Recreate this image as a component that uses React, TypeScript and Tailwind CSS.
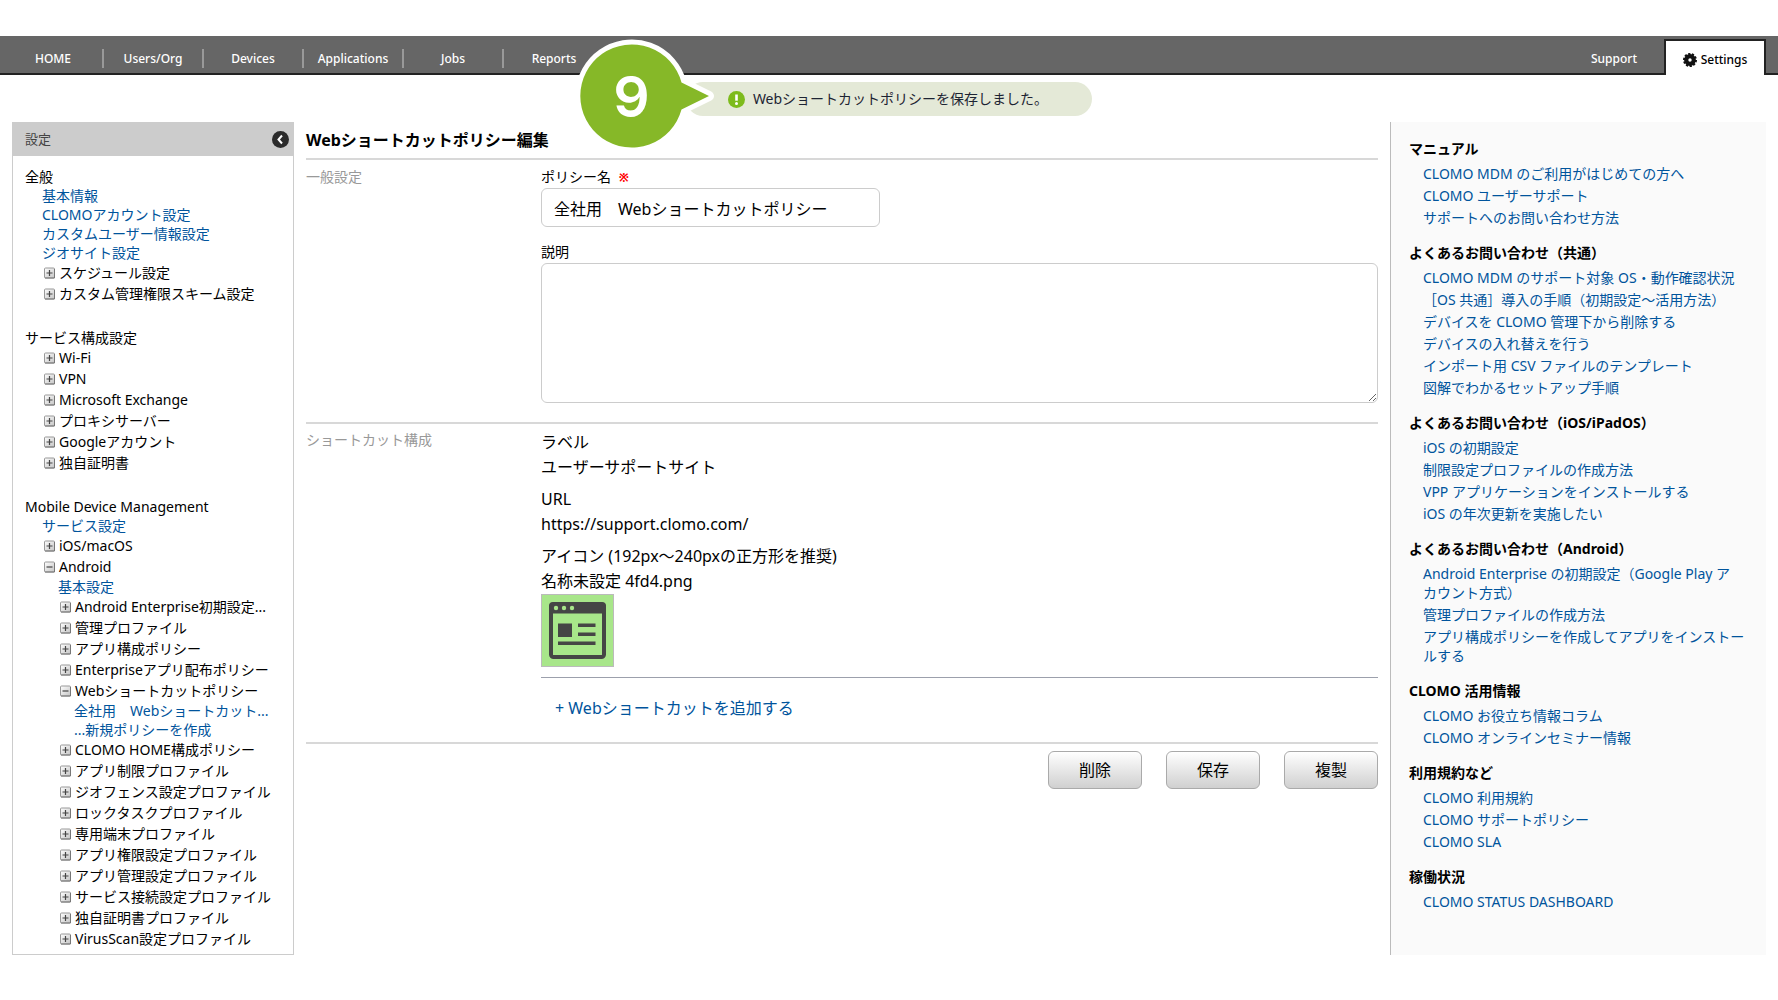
import { useState } from 'react'
import clsx from 'clsx'

type Row = { kind: 'link' | 'open' | 'closed'; level: 1 | 2 | 3; label: string }

const groups: { title: string; rows: Row[] }[] = [
  {
    title: '全般',
    rows: [
      { kind: 'link', level: 1, label: '基本情報' },
      { kind: 'link', level: 1, label: 'CLOMOアカウント設定' },
      { kind: 'link', level: 1, label: 'カスタムユーザー情報設定' },
      { kind: 'link', level: 1, label: 'ジオサイト設定' },
      { kind: 'closed', level: 1, label: 'スケジュール設定' },
      { kind: 'closed', level: 1, label: 'カスタム管理権限スキーム設定' },
    ],
  },
  {
    title: 'サービス構成設定',
    rows: [
      { kind: 'closed', level: 1, label: 'Wi-Fi' },
      { kind: 'closed', level: 1, label: 'VPN' },
      { kind: 'closed', level: 1, label: 'Microsoft Exchange' },
      { kind: 'closed', level: 1, label: 'プロキシサーバー' },
      { kind: 'closed', level: 1, label: 'Googleアカウント' },
      { kind: 'closed', level: 1, label: '独自証明書' },
    ],
  },
  {
    title: 'Mobile Device Management',
    rows: [
      { kind: 'link', level: 1, label: 'サービス設定' },
      { kind: 'closed', level: 1, label: 'iOS/macOS' },
      { kind: 'open', level: 1, label: 'Android' },
      { kind: 'link', level: 2, label: '基本設定' },
      { kind: 'closed', level: 2, label: 'Android Enterprise初期設定...' },
      { kind: 'closed', level: 2, label: '管理プロファイル' },
      { kind: 'closed', level: 2, label: 'アプリ構成ポリシー' },
      { kind: 'closed', level: 2, label: 'Enterpriseアプリ配布ポリシー' },
      { kind: 'open', level: 2, label: 'Webショートカットポリシー' },
      { kind: 'link', level: 3, label: '全社用　Webショートカット...' },
      { kind: 'link', level: 3, label: '...新規ポリシーを作成' },
      { kind: 'closed', level: 2, label: 'CLOMO HOME構成ポリシー' },
      { kind: 'closed', level: 2, label: 'アプリ制限プロファイル' },
      { kind: 'closed', level: 2, label: 'ジオフェンス設定プロファイル' },
      { kind: 'closed', level: 2, label: 'ロックタスクプロファイル' },
      { kind: 'closed', level: 2, label: '専用端末プロファイル' },
      { kind: 'closed', level: 2, label: 'アプリ権限設定プロファイル' },
      { kind: 'closed', level: 2, label: 'アプリ管理設定プロファイル' },
      { kind: 'closed', level: 2, label: 'サービス接続設定プロファイル' },
      { kind: 'closed', level: 2, label: '独自証明書プロファイル' },
      { kind: 'closed', level: 2, label: 'VirusScan設定プロファイル' },
    ],
  },
]

const helpGroups = [
  {
    title: 'マニュアル',
    links: ['CLOMO MDM のご利用がはじめての方へ', 'CLOMO ユーザーサポート', 'サポートへのお問い合わせ方法'],
  },
  {
    title: 'よくあるお問い合わせ（共通）',
    links: [
      'CLOMO MDM のサポート対象 OS・動作確認状況',
      '［OS 共通］導入の手順（初期設定〜活用方法）',
      'デバイスを CLOMO 管理下から削除する',
      'デバイスの入れ替えを行う',
      'インポート用 CSV ファイルのテンプレート',
      '図解でわかるセットアップ手順',
    ],
  },
  {
    title: 'よくあるお問い合わせ（iOS/iPadOS）',
    links: ['iOS の初期設定', '制限設定プロファイルの作成方法', 'VPP アプリケーションをインストールする', 'iOS の年次更新を実施したい'],
  },
  {
    title: 'よくあるお問い合わせ（Android）',
    links: [
      'Android Enterprise の初期設定（Google Play ア\nカウント方式）',
      '管理プロファイルの作成方法',
      'アプリ構成ポリシーを作成してアプリをインストールする',
    ],
  },
  { title: 'CLOMO 活用情報', links: ['CLOMO お役立ち情報コラム', 'CLOMO オンラインセミナー情報'] },
  { title: '利用規約など', links: ['CLOMO 利用規約', 'CLOMO サポートポリシー', 'CLOMO SLA'] },
  { title: '稼働状況', links: ['CLOMO STATUS DASHBOARD'] },
]

const navItems = ['HOME', 'Users/Org', 'Devices', 'Applications', 'Jobs', 'Reports']

function ToggleIcon({ open }: { open: boolean }) {
  return (
    <svg width="11" height="12" viewBox="0 0 11 12" className="shrink-0" aria-hidden="true">
      <defs>
        <linearGradient id="toggle" x1="0" y1="0" x2="1" y2="1">
          <stop offset="0" stopColor="#fff" />
          <stop offset="1" stopColor="#c4c4c4" />
        </linearGradient>
      </defs>
      <rect x="0.5" y="1" width="10" height="10" rx="1" fill="url(#toggle)" stroke="#999" />
      <path d="M10.5 2v9H1" fill="none" stroke="#777" />
      <path d={open ? 'M2.5 6h6' : 'M2.5 6h6M5.5 3v6'} stroke="#444" strokeWidth="1.2" />
    </svg>
  )
}

function GearIcon() {
  return (
    <svg width="14" height="14" viewBox="0 0 14 14" className="shrink-0" aria-hidden="true">
      <circle cx="7" cy="7" r="6" fill="none" stroke="#111" strokeWidth="2" pathLength="20" strokeDasharray="1.2 0.8" />
      <circle cx="7" cy="7" r="3.8" fill="none" stroke="#111" strokeWidth="4.2" />
    </svg>
  )
}

function TreeRow({ row }: { row: Row }) {
  if (row.kind === 'link') {
    return (
      <li className={clsx('leading-[19px]', { 'pl-[17px]': row.level === 1, 'pl-[33px]': row.level === 2, 'pl-[49px]': row.level === 3 })}>
        <a href="#" className="text-[#00549c] hover:underline">{row.label}</a>
      </li>
    )
  }
  return (
    <li className={clsx('leading-[21px]', row.level === 1 ? 'pl-[19px]' : 'pl-[35px]')}>
      <button type="button" className="flex items-center gap-1 cursor-pointer whitespace-nowrap">
        <ToggleIcon open={row.kind === 'open'} />
        {row.label}
      </button>
    </li>
  )
}

function StepMarker() {
  return (
    <div className="absolute -left-[111px] -top-[44px] w-[140px] h-[114px]">
      <svg width="140" height="114" viewBox="0 0 140 114" aria-hidden="true">
        <path
          d="M106.5 44.5 L134 58 L106.5 71.5 A51.5 51.5 0 1 1 106.5 44.5 Z"
          fill="#86b828"
          stroke="#fff"
          strokeWidth="10"
          strokeLinejoin="round"
          paintOrder="stroke"
        />
        <text x="56.5" y="79" textAnchor="middle" fill="#fff" fontFamily="Inter, sans-serif" fontSize="57" fontWeight="600">9</text>
      </svg>
    </div>
  )
}

export default function App() {
  const [name, setName] = useState('全社用　Webショートカットポリシー')
  const [description, setDescription] = useState('')

  return (
    <div className="pt-9 pb-11 bg-white text-black text-sm font-['Noto_Sans','Noto_Sans_CJK_JP',sans-serif]">
      <header className="flex justify-between h-[39px] bg-[#666] border-b-2 border-[#222] text-white text-xs font-medium">
        <nav className="flex items-center pt-2 pl-1">
          {navItems.map((item, i) => (
            <a
              key={item}
              href="#"
              className={clsx('w-[100px] text-center leading-[19px]', i < navItems.length - 1 && 'border-r-2 border-[#999]')}
            >
              {item}
            </a>
          ))}
        </nav>
        <div className="flex pr-3">
          <a href="#" className="w-[100px] pt-2 text-center leading-[29px]">Support</a>
          <a
            href="#"
            className="flex items-center justify-center gap-1 w-[102px] h-9 mt-[3px] pt-1 bg-white border-2 border-b-0 border-[#222] text-black"
          >
            <GearIcon />
            Settings
          </a>
        </div>
      </header>

      <div className="flex justify-center pt-[7px] pb-[6px]">
        <div role="status" className="relative flex items-center gap-2 h-[34px] pl-[42px] pr-11 rounded-full bg-[#e4e9d7] text-[#1d2433]">
          <svg width="17" height="17" viewBox="0 0 17 17" className="shrink-0" aria-hidden="true">
            <circle cx="8.5" cy="8.5" r="8.5" fill="#7dbb1c" />
            <path d="M8.5 3.5v6.2" stroke="#fff" strokeWidth="2.6" />
            <circle cx="8.5" cy="12.4" r="1.5" fill="#fff" />
          </svg>
          Webショートカットポリシーを保存しました。
          <StepMarker />
        </div>
      </div>

      <div className="flex gap-3 px-3">
        <aside className="w-[282px] shrink-0 border border-[#ccc] pb-[5px]">
          <div className="flex items-center justify-between h-[33px] pl-3 pr-1 bg-[#ccc] text-[#444] text-[13px]">
            設定
            <button type="button" aria-label="閉じる" className="cursor-pointer">
              <svg width="17" height="17" viewBox="0 0 17 17" aria-hidden="true">
                <circle cx="8.5" cy="8.5" r="8.5" fill="#2b2b2b" />
                <path d="M10 4.5 6.5 8.5l3.500 4" fill="none" stroke="#fff" strokeWidth="2" />
              </svg>
            </button>
          </div>
          <div className="flex flex-col gap-6 pt-[11px] pl-3">
            {groups.map((group) => (
              <div key={group.title}>
                <h2 className="leading-[19px]">{group.title}</h2>
                <ul>
                  {group.rows.map((row) => (
                    <TreeRow key={row.label} row={row} />
                  ))}
                </ul>
              </div>
            ))}
          </div>
        </aside>

        <main className="flex-1 min-w-0">
          <h1 className="text-base leading-9 font-bold">Webショートカットポリシー編集</h1>

          <section className="flex border-t-2 border-[#d8d8d8] pt-[7px] pb-[19px]">
            <h2 className="w-[235px] shrink-0 leading-5 text-[#999]">一般設定</h2>
            <div className="flex flex-col flex-1 min-w-0">
              <label htmlFor="policy-name" className="leading-5">
                ポリシー名 <span className="ml-1 text-xs font-bold text-[#f00]">※</span>
              </label>
              <input
                id="policy-name"
                type="text"
                value={name}
                onChange={(e) => setName(e.target.value)}
                className="w-[339px] h-[39px] mt-px px-3 border border-[#ccc] rounded-md text-base"
              />
              <label htmlFor="policy-description" className="mt-[15px] leading-5">説明</label>
              <textarea
                id="policy-description"
                value={description}
                onChange={(e) => setDescription(e.target.value)}
                className="w-full h-[140px] mt-px px-3 py-2 border border-[#ccc] rounded-md text-base"
              />
            </div>
          </section>

          <section className="flex border-t-2 border-[#d8d8d8] pt-[6px] pb-[22px]">
            <h2 className="w-[235px] shrink-0 leading-5 text-[#999]">ショートカット構成</h2>
            <div className="flex-1 min-w-0">
              <dl className="flex flex-col gap-[7px] pb-[10px] border-b border-[#9ca0ac] text-base leading-[25px]">
                <div>
                  <dt>ラベル</dt>
                  <dd>ユーザーサポートサイト</dd>
                </div>
                <div>
                  <dt>URL</dt>
                  <dd>https://support.clomo.com/</dd>
                </div>
                <div>
                  <dt>アイコン (192px〜240pxの正方形を推奨)</dt>
                  <dd>
                    名称未設定 4fd4.png
                    <svg width="73" height="73" viewBox="0 0 73 73" className="block" aria-hidden="true">
                      <rect x="0.5" y="0.5" width="72" height="72" fill="#a8e68a" stroke="#bbb" />
                      <rect x="10" y="10.500" width="53" height="52.500" rx="2.500" fill="none" stroke="#454545" strokeWidth="4" />
                      <path d="M8 19.500V12a4 4 0 0 1 4-4h49a4 4 0 0 1 4 4v7.500z" fill="#454545" />
                      <circle cx="15" cy="14" r="2.200" fill="#a8e68a" />
                      <circle cx="23" cy="14" r="2.200" fill="#a8e68a" />
                      <circle cx="31" cy="14" r="2.200" fill="#a8e68a" />
                      <path d="M17 29.500h14v13.500H17zM37 29.500h17.500V33H37zM37 38.500h17.500V42H37zM17 47.500h37.500V51H17z" fill="#454545" />
                    </svg>
                  </dd>
                </div>
              </dl>
              <a href="#" className="inline-block mt-[18px] ml-[14px] text-base leading-6 text-[#00549c] hover:underline">
                + Webショートカットを追加する
              </a>
            </div>
          </section>

          <div className="flex justify-end gap-6 border-t-2 border-[#d8d8d8] pt-[7px]">
            {['削除', '保存', '複製'].map((label) => (
              <button
                key={label}
                type="button"
                className="w-[94px] h-[38px] border border-[#aaa] rounded-md bg-linear-to-b from-white to-[#d0d0d0] text-base cursor-pointer"
              >
                {label}
              </button>
            ))}
          </div>
        </main>

        <aside className="flex flex-col gap-[13px] w-[376px] shrink-0 pt-[17px] pl-[18px] pr-5 border-l border-[#bbb] bg-[#fafafa] leading-[19px]">
          {helpGroups.map((group) => (
            <div key={group.title}>
              <h2 className="font-bold">{group.title}</h2>
              <ul className="flex flex-col gap-[3px] pt-[6px] pb-[3px] pl-[14px]">
                {group.links.map((link) => (
                  <li key={link} className="whitespace-pre-line">
                    <a href="#" className="text-[#00549c] hover:underline">{link}</a>
                  </li>
                ))}
              </ul>
            </div>
          ))}
        </aside>
      </div>
    </div>
  )
}
